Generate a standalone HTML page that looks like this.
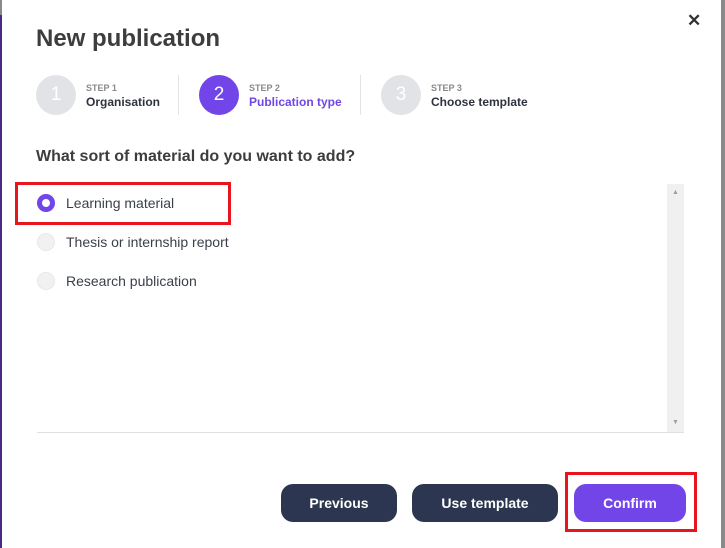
<html><head><style>
body{margin:0;width:725px;height:548px;background:#8a8a8a;position:relative;overflow:hidden;font-family:"Liberation Sans",sans-serif}
.m{position:absolute;left:2px;top:0;width:719px;height:548px;background:#fff}
.edge{position:absolute;left:0;top:15px;width:2px;height:533px;background:#4b2a86}
.a{position:absolute}
h1{position:absolute;left:36px;top:25px;margin:0;font-size:24px;font-weight:bold;color:#3d3d3d}
.c{position:absolute;width:40px;height:40px;border-radius:50%;background:#e2e3e6;color:#fff;font-size:19px;text-align:center;line-height:40px;top:75px}
.s{position:absolute;font-size:9px;font-weight:bold;color:#8a8a8a;top:83px}
.t{position:absolute;font-size:12px;font-weight:bold;color:#2f3340;top:95px}
.sep{position:absolute;top:75px;width:1px;height:40px;background:#e4e4e4}
.r{position:absolute;left:37px;width:18px;height:18px;border-radius:50%;background:#f1f1f2;border:1px solid #e8e8e8;box-sizing:border-box}
.l{position:absolute;left:66px;font-size:14px;color:#3a3f4a}
.b{position:absolute;top:484px;height:38px;border-radius:12px;background:#2d3650;color:#fff;font-weight:bold;font-size:14px;text-align:center;line-height:38px}
</style></head><body>
<div class="m"></div><div class="edge"></div>
<h1>New publication</h1>
<div class="a" style="left:687px;top:11px;font-size:17px;font-weight:bold;color:#333">✕</div>
<div class="c" style="left:36px">1</div><div class="s" style="left:86px">STEP 1</div><div class="t" style="left:86px">Organisation</div>
<div class="sep" style="left:178px"></div>
<div class="c" style="left:199px;background:#7245e8">2</div><div class="s" style="left:249px">STEP 2</div><div class="t" style="left:249px;color:#7245e8">Publication type</div>
<div class="sep" style="left:360px"></div>
<div class="c" style="left:381px">3</div><div class="s" style="left:431px">STEP 3</div><div class="t" style="left:431px">Choose template</div>
<div class="a" style="left:36px;top:148px;font-size:16px;font-weight:bold;color:#3d3d3d">What sort of material do you want to add?</div>
<div class="a" style="left:667px;top:184px;width:17px;height:248px;background:#f0f0f0"></div>
<div class="a" style="left:672px;top:189px;font-size:7px;color:#a0a0a0">▲</div>
<div class="a" style="left:672px;top:419px;font-size:7px;color:#a0a0a0">▼</div>
<div class="a" style="left:37px;top:432px;width:647px;height:1px;background:#e0e0e0"></div>
<div class="r" style="top:194px;border:5px solid #7245e8;background:#fff"></div><div class="l" style="top:195px">Learning material</div>
<div class="r" style="top:233px"></div><div class="l" style="top:234px">Thesis or internship report</div>
<div class="r" style="top:272px"></div><div class="l" style="top:273px">Research publication</div>
<div class="a" style="left:15px;top:182px;width:210px;height:37px;border:3px solid #e8141e"></div>
<div class="b" style="left:281px;width:116px">Previous</div>
<div class="b" style="left:412px;width:146px">Use template</div>
<div class="b" style="left:574px;width:112px;background:#7245e8">Confirm</div>
<div class="a" style="left:565px;top:472px;width:126px;height:54px;border:3px solid #e8141e"></div>
</body></html>
